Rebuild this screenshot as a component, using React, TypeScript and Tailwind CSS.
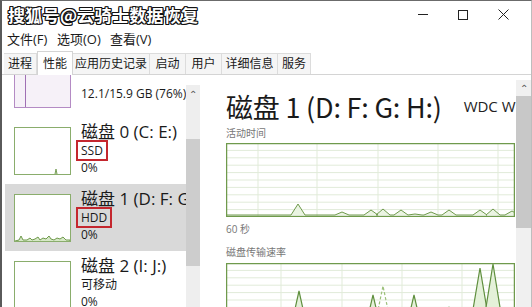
import React from "react";

const FONT = "font-['Open_Sans','Noto_Sans_CJK_SC',sans-serif]";

function Thumb({ kind }: { kind: "mem" | "d0" | "d1" | "d2" }) {
  if (kind === "mem") {
    return (
      <div className="w-[57px] h-[48px] shrink-0 border border-[#b48bc4] bg-[#f6f1f8] relative">
        <div className="absolute left-[10px] top-0 bottom-0 w-px bg-[#a070b4]" />
      </div>
    );
  }
  return (
    <div className="w-[57px] h-[48px] shrink-0 border border-[#8aad6c] bg-white">
      <svg width="55" height="46" viewBox="0 0 55 46">
        {kind === "d0" && <polyline points="40,46 41,41 42,46" fill="#cfe3bf" stroke="#7ba05b" strokeWidth="1" />}
        {kind === "d1" && (
          <polyline
            points="0,46 4,45 6,41 8,45 12,45 15,43 17,45 20,44 23,42 25,45 28,43 31,44 34,41 36,44 39,45 42,43 45,44 48,42 51,45 55,45 55,46"
            fill="#d6e8c7"
            stroke="#6f9a4c"
            strokeWidth="1"
          />
        )}
      </svg>
    </div>
  );
}

function DiskItem({
  kind,
  title,
  tag,
  boxed,
  selected,
}: {
  kind: "d0" | "d1" | "d2";
  title: string;
  tag: string;
  boxed?: boolean;
  selected?: boolean;
}) {
  return (
    <div className={`h-[67px] shrink-0 flex pl-[9px] pt-[10px] gap-[10px] ${selected ? "bg-[#d9d9d9]" : ""}`}>
      <Thumb kind={kind} />
      <div className="flex flex-col mt-[-5px] whitespace-nowrap">
        <div className="text-[17px] leading-[20px] text-[#1a1a1a]">{title}</div>
        <div className="text-[12px] leading-[17px] text-[#1a1a1a]">
          {boxed ? (
            <span className="inline-block border-2 border-[#c4272e] px-[3px] ml-[-5px] my-[-2px] leading-[17px]">{tag}</span>
          ) : (
            tag
          )}
        </div>
        <div className="text-[12px] leading-[17px] text-[#1a1a1a]">0%</div>
      </div>
    </div>
  );
}

function Grid({ w, h, vx }: { w: number; h: number; vx: number[] }) {
  const rows = [];
  for (let y = 7.4; y < h - 1; y += 7.4) rows.push(y);
  return (
    <>
      {rows.map((y) => (
        <line key={"h" + y} x1="0" x2={w} y1={y} y2={y} stroke="#e1ebd9" strokeWidth="1" />
      ))}
      {vx.map((x) => (
        <line key={"v" + x} x1={x} x2={x} y1="0" y2={h} stroke="#e1ebd9" strokeWidth="1" />
      ))}
    </>
  );
}

function ActivityChart() {
  const w = 289;
  const h = 74;
  const b = 72;
  const bumps: [number, number][] = [
    [72, 11], [116, 3], [145, 5], [157, 6], [175, 5], [189, 1], [205, 3], [223, 5], [254, 5], [267, 6], [286, 4],
  ];
  const pts: string[] = [`1,${b}`];
  bumps.forEach(([x, hh]) => {
    pts.push(`${x - 7},${b}`, `${x},${b - hh}`, `${x + 7},${b}`);
  });
  pts.push(`${w - 1},${b}`);
  return (
    <svg width={w} height={h} className="block shrink-0">
      <rect x="0" y="0" width={w} height={h} fill="#ffffff" />
      <Grid w={w} h={h} vx={[32, 91, 152, 212, 272]} />
      <polyline points={pts.join(" ")} fill="#eaf4e2" stroke="#6f9a4c" strokeWidth="1" />
      <rect x="0.5" y="0.5" width={w - 1} height={h - 1} fill="none" stroke="#6f9a4c" strokeWidth="1.5" />
    </svg>
  );
}

function TransferChart() {
  const w = 289;
  const h = 100;
  const spikes: [number, number][] = [
    [73, 28], [147, 32], [188, 32], [223, 45], [254, 5], [267, 1],
  ];
  return (
    <svg width={w} height={h} className="block shrink-0">
      <rect x="0" y="0" width={w} height={h} fill="#ffffff" />
      <Grid w={w} h={h} vx={[55, 116, 176, 236]} />
      {spikes.map(([x, top]) => (
        <polygon key={x} points={`${x - 16},${h} ${x},${top} ${x + 16},${h}`} fill="#e4f1d9" stroke="#5f8f3e" strokeWidth="1.2" />
      ))}
      <polyline points={`141,${h} 157,23 173,${h}`} fill="none" stroke="#9cc07a" strokeWidth="1.2" strokeDasharray="3 2" />
      <rect x="0.5" y="0.5" width={w - 1} height={h + 5} fill="none" stroke="#6f9a4c" strokeWidth="1.5" />
    </svg>
  );
}

export default function App() {
  return (
    <div className={`w-[532px] h-[307px] overflow-hidden bg-white flex flex-col border-l-2 border-t border-r border-l-[#5a5a5a] border-t-[#6b6b6b] border-r-[#bdbdbd] ${FONT} text-[#1a1a1a]`}>
      {/* title bar */}
      <div className="h-[27px] shrink-0 flex items-center justify-between pl-[6px] pr-[8px]">
        <div className="text-[17px] font-bold tracking-[0.3px] text-white [text-shadow:1px_0_0_#111,-1px_0_0_#111,0_1px_0_#111,0_-1px_0_#111,1px_1px_0_#111,-1px_-1px_0_#111,1px_-1px_0_#111,-1px_1px_0_#111] font-['Noto_Sans_CJK_SC',sans-serif]">
          搜狐号@云骑士数据恢复
        </div>
        <div className="flex h-full">
          <div className="w-[40px] flex items-center justify-center">
            <div className="w-[10px] h-px bg-[#222]" />
          </div>
          <div className="w-[40px] flex items-center justify-center">
            <div className="w-[10px] h-[10px] border border-[#222]" />
          </div>
          <div className="w-[40px] flex items-center justify-center">
            <svg width="11" height="11" viewBox="0 0 11 11">
              <path d="M0.5 0.5 L10.5 10.5 M10.5 0.5 L0.5 10.5" stroke="#222" strokeWidth="1" />
            </svg>
          </div>
        </div>
      </div>

      {/* menu */}
      <div className="h-[23px] shrink-0 flex items-center pl-[5px] text-[13px] leading-none">
        <span className="w-[50px]">文件(F)</span>
        <span className="w-[53px]">选项(O)</span>
        <span>查看(V)</span>
      </div>

      {/* tabs */}
      <div className="h-[24px] shrink-0 flex items-end pl-[2px] border-b border-[#d4d4d4] text-[12px] leading-none whitespace-nowrap">
        {[
          ["进程", "w-[33px]"],
          ["性能", "w-[36px]"],
          ["应用历史记录", "w-[77px]"],
          ["启动", "w-[36px]"],
          ["用户", "w-[36px]"],
          ["详细信息", "w-[56px]"],
          ["服务", "w-[33px]"],
        ].map(([t, w]) =>
          t === "性能" ? (
            <div key={t} className={`${w} h-[24px] mb-[-1px] bg-white border-x border-t border-[#d4d4d4] flex items-center justify-center`}>
              {t}
            </div>
          ) : (
            <div key={t} className={`${w} h-[21px] bg-[#f5f5f5] border-r border-t border-[#dcdcdc] flex items-center justify-center`}>
              {t}
            </div>
          )
        )}
      </div>

      {/* body */}
      <div className="flex-1 min-h-0 flex">
        {/* left list */}
        <div className="w-[184px] pl-[3px] overflow-hidden flex flex-col">
          <div className="h-[67px] shrink-0 mt-[-25px] flex pl-[9px] pt-[10px] gap-[10px]">
            <Thumb kind="mem" />
            <div className="text-[12px] leading-[17px] mt-[25px] whitespace-nowrap">12.1/15.9 GB (76%)</div>
          </div>
          <DiskItem kind="d0" title="磁盘 0 (C: E:)" tag="SSD" boxed />
          <DiskItem kind="d1" title="磁盘 1 (D: F: G: H:)" tag="HDD" boxed selected />
          <DiskItem kind="d2" title="磁盘 2 (I: J:)" tag="可移动" />
        </div>
        <div className="w-[14px] mt-[10px] bg-[#eeeeee] flex flex-col items-center">
          <div className="h-[17px] shrink-0 flex items-center text-[10px] text-[#555] leading-none">⌃</div>
          <div className="w-full h-[127px] shrink-0 mt-[37px] bg-[#cdcdcd]" />
        </div>

        {/* right detail */}
        <div className="w-[316px] pl-[26px] flex flex-col overflow-hidden">
          <div className="h-[34px] shrink-0 mt-[14px] flex items-center whitespace-nowrap">
            <span className="text-[27px] leading-none font-['Noto_Sans_CJK_SC',sans-serif] tracking-[-0.2px]">磁盘 1 (D: F: G: H:)</span>
            <span className="text-[15px] leading-none ml-[22px] text-[#222]">WDC WD10</span>
          </div>
          <div className="h-[20px] shrink-0 flex items-center text-[10px] text-[#777] pt-[1px]">活动时间</div>
          <ActivityChart />
          <div className="h-[19px] shrink-0 flex items-center text-[10px] text-[#777] mt-[3px]">60 秒</div>
          <div className="h-[20px] shrink-0 flex items-center text-[10px] text-[#777] mt-[3px]">磁盘传输速率</div>
          <div className="mt-[1px] shrink-0">
            <TransferChart />
          </div>
        </div>
        <div className="w-[15px] mt-[5px] bg-[#f0f0f0] flex flex-col items-center">
          <div className="h-[16px] shrink-0 flex items-center text-[10px] text-[#555] leading-none">⌃</div>
          <div className="w-full h-[132px] shrink-0 bg-[#c8c8c8]" />
        </div>
      </div>
    </div>
  );
}
